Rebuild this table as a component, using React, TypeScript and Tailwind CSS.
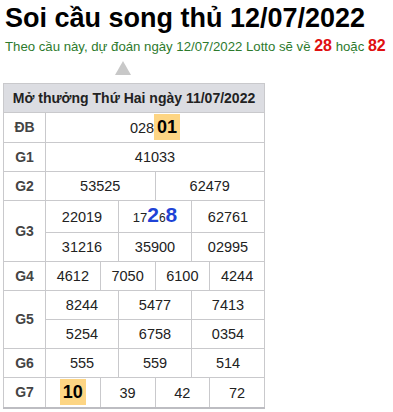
const hl = "bg-[#fdd584] px-[3px] py-[3px] font-bold text-[18px] text-black";

function Label({ children, rowSpan }: { children: React.ReactNode; rowSpan?: number }) {
  return (
    <td rowSpan={rowSpan} className="border border-[#c9c9cc] text-center font-bold text-[#444] text-[14px]">
      {children}
    </td>
  );
}

function Cell({ children, span }: { children: React.ReactNode; span: number }) {
  return (
    <td colSpan={span} className="border border-[#c9c9cc] text-center text-[14.5px] leading-[18px] py-[5px] text-[#222]">
      {children}
    </td>
  );
}

function Row({ label, values }: { label?: string; values: React.ReactNode[] }) {
  const span = 12 / values.length;
  return (
    <tr>
      {label && <Label>{label}</Label>}
      {values.map((v, i) => (
        <Cell key={i} span={span}>{v}</Cell>
      ))}
    </tr>
  );
}

export default function App() {
  return (
    <div className="bg-white px-[3px] pt-[1px] font-['Liberation_Sans',Arial,sans-serif]">
      {/* Title */}
      <h1 className="text-[27px] leading-[34px] font-bold text-black pl-[2px]">Soi cầu song thủ 12/07/2022</h1>
      <p className="text-[13.2px] leading-[22px] text-[#2d7a2d] pl-[2px] whitespace-nowrap">
        Theo cầu này, dự đoán ngày 12/07/2022 Lotto sẽ về{" "}
        <b className="text-[16px] text-[#e01010]">28</b> hoặc{" "}
        <b className="text-[16px] text-[#e01010]">82</b>
      </p>

      {/* Pointer */}
      <div className="pl-[112px] pt-[3px] pb-[8px]">
        <div className="w-0 h-0 border-l-[8px] border-r-[8px] border-b-[14px] border-l-transparent border-r-transparent border-b-[#c8c8c8]" />
      </div>

      {/* Results table */}
      <table className="table-fixed border-collapse w-[262px] border border-[#c9c9cc] border-b-2 border-b-[#bdbdc2]">
        <colgroup>
          <col className="w-[42px]" />
          {Array.from({ length: 12 }).map((_, i) => (
            <col key={i} />
          ))}
        </colgroup>
        <tbody>
          <tr>
            <td colSpan={13} className="bg-[#dcdde2] border border-[#c9c9cc] text-center font-bold text-[14px] leading-[18px] py-[5px] text-[#222]">
              Mở thưởng Thứ Hai ngày 11/07/2022
            </td>
          </tr>
          <Row
            label="ĐB"
            values={[
              <span>
                028<span className={hl}>01</span>
              </span>,
            ]}
          />
          <Row label="G1" values={["41033"]} />
          <Row label="G2" values={["53525", "62479"]} />
          <tr>
            <Label rowSpan={2}>G3</Label>
            <Cell span={4}>22019</Cell>
            <Cell span={4}>
              <span className="text-[13px]">17</span>
              <b className="text-[21px] text-[#1f43d6]">2</b>
              <span className="text-[12px]">6</span>
              <b className="text-[21px] text-[#1f43d6]">8</b>
            </Cell>
            <Cell span={4}>62761</Cell>
          </tr>
          <Row values={["31216", "35900", "02995"]} />
          <Row label="G4" values={["4612", "7050", "6100", "4244"]} />
          <tr>
            <Label rowSpan={2}>G5</Label>
            <Cell span={4}>8244</Cell>
            <Cell span={4}>5477</Cell>
            <Cell span={4}>7413</Cell>
          </tr>
          <Row values={["5254", "6758", "0354"]} />
          <Row label="G6" values={["555", "559", "514"]} />
          <Row
            label="G7"
            values={[<span className={hl}>10</span>, "39", "42", "72"]}
          />
        </tbody>
      </table>
    </div>
  );
}
